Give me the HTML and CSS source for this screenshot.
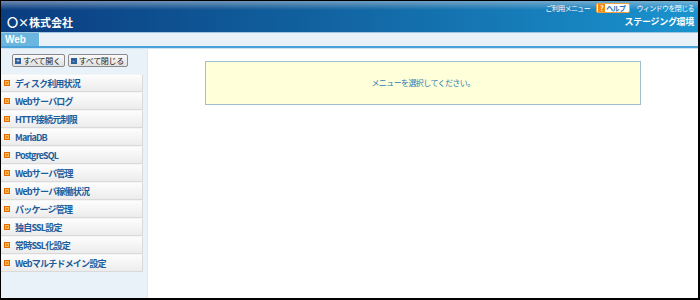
FILE: index.html
```html
<!DOCTYPE html>
<html lang="ja">
<head>
    <meta charset="UTF-8">
    <title>コントロールパネル</title>
    <link rel="stylesheet" href="styles.css">
</head>
<body>
<div class="frame">
    <div class="header">
        <div class="logo">〇×株式会社</div>
        <div class="header-right">
            <div class="links">
                <span>ご利用メニュー</span>
                <span class="help"><span class="q">?</span>ヘルプ</span>
                <span>ウィンドウを閉じる</span>
            </div>
            <div class="env">ステージング環境</div>
        </div>
    </div>
    <div class="tabbar">
        <div class="tab">Web</div>
    </div>
    <div class="body">
        <div class="side">
            <div class="buttons">
                <span class="btn"><span class="ico">+</span>すべて開く</span>
                <span class="btn"><span class="ico">-</span>すべて閉じる</span>
            </div>
            <ul class="menu">
                <li><span class="mark"></span>ディスク利用状況</li>
                <li><span class="mark"></span>Webサーバログ</li>
                <li><span class="mark"></span>HTTP接続元制限</li>
                <li><span class="mark"></span>MariaDB</li>
                <li><span class="mark"></span>PostgreSQL</li>
                <li><span class="mark"></span>Webサーバ管理</li>
                <li><span class="mark"></span>Webサーバ稼働状況</li>
                <li><span class="mark"></span>パッケージ管理</li>
                <li><span class="mark"></span>独自SSL設定</li>
                <li><span class="mark"></span>常時SSL化設定</li>
                <li><span class="mark"></span>Webマルチドメイン設定</li>
            </ul>
        </div>
        <div class="main">
            <div class="notice">メニューを選択してください。</div>
        </div>
    </div>
</div>
</body>
</html>
```

FILE: styles.css
```css
body {
    margin: 0;
    font-family: "Noto Sans CJK JP", "Liberation Sans", sans-serif;
}
.frame {
    width: 697px;
    height: 297px;
    border: 1px solid #000;
    border-right-width: 2px;
    border-bottom-width: 2px;
    display: flex;
    flex-direction: column;
    overflow: hidden;
    background: #fff;
}
.header {
    height: 31px;
    display: flex;
    justify-content: space-between;
    background: linear-gradient(to bottom, rgba(190, 200, 215, 0.55), rgba(255, 255, 255, 0) 9px),
                linear-gradient(to right, #0a3c80, #11629f 45%, #1a93cf);
}
.logo {
    color: #fff;
    font-size: 11px;
    font-weight: bold;
    padding: 14px 0 0 6px;
    line-height: 14px;
}
.header-right {
    display: flex;
    flex-direction: column;
    align-items: flex-end;
    padding: 1px 4px 0 0;
}
.links {
    display: flex;
    align-items: center;
    gap: 4px;
    font-size: 7px;
    color: #fff;
    letter-spacing: -0.6px;
    line-height: 12px;
}
.help {
    background: #fff;
    color: #2a6fb2;
    border: 1px solid #f0a040;
    border-radius: 2px;
    font-size: 7px;
    font-weight: bold;
    line-height: 8px;
    padding: 0 4px 0 1px;
    margin: 0 2px;
}
.q {
    display: inline-block;
    background: #f08a10;
    color: #fff;
    width: 7px;
    text-align: center;
    margin-right: 1px;
    letter-spacing: 0;
}
.env {
    color: #fff;
    font-size: 9px;
    font-weight: bold;
    line-height: 12px;
    margin-top: 2px;
    letter-spacing: -0.3px;
}
.tabbar {
    height: 13px;
    background: #e8f0f8;
    border-top: 1px solid #9cc8e4;
    border-bottom: 2px solid #4aa2da;
    display: flex;
}
.tab {
    width: 34px;
    background: #6ab6de;
    color: #fff;
    font-family: "Liberation Sans", sans-serif;
    font-size: 10px;
    font-weight: bold;
    line-height: 13px;
    padding-left: 4px;
    border-right: 1px solid #fff;
}
.body {
    flex: 1;
    display: flex;
    border-top: 1px solid #cfe3f1;
}
.side {
    width: 146px;
    background: #eaf2f9;
    border-right: 1px solid #dde8f1;
}
.buttons {
    display: flex;
    justify-content: center;
    gap: 3px;
    padding: 5px 10px 0 2px;
    height: 14px;
}
.btn {
    display: flex;
    align-items: center;
    height: 11px;
    padding: 0 3px 0 2px;
    border: 1px solid #8a8a8a;
    border-radius: 2px;
    background: linear-gradient(#fafafa, #e0e0e0);
    font-size: 8px;
    color: #222;
    letter-spacing: -0.3px;
}
.ico {
    width: 6px;
    height: 6px;
    background: #2c5f9e;
    color: #fff;
    font-size: 6px;
    line-height: 6px;
    text-align: center;
    margin-right: 2px;
    letter-spacing: 0;
}
.menu {
    list-style: none;
    margin: 6px 0 0 0;
    padding: 0;
    width: 142px;
}
.menu li {
    height: 16px;
    border: 1px solid #dadada;
    border-top-color: #f4f4f4;
    border-left: none;
    background: linear-gradient(#fdfdfd, #ececec);
    display: flex;
    align-items: center;
    font-size: 9px;
    font-weight: bold;
    color: #1d5d9c;
    letter-spacing: -0.8px;
}
.mark {
    width: 6px;
    height: 6px;
    background: #f08a10;
    border: 1px solid #e06a00;
    margin: 0 5px 0 3px;
    box-sizing: border-box;
    box-shadow: inset 0 0 0 1px #ffb54a;
}
.main {
    flex: 1;
    padding: 12px 0 0 57px;
}
.notice {
    width: 434px;
    height: 42px;
    background: #ffffd9;
    border: 1px solid #9ebfd2;
    color: #2d7db5;
    font-size: 8px;
    line-height: 42px;
    text-align: center;
    letter-spacing: -0.6px;
}
```
